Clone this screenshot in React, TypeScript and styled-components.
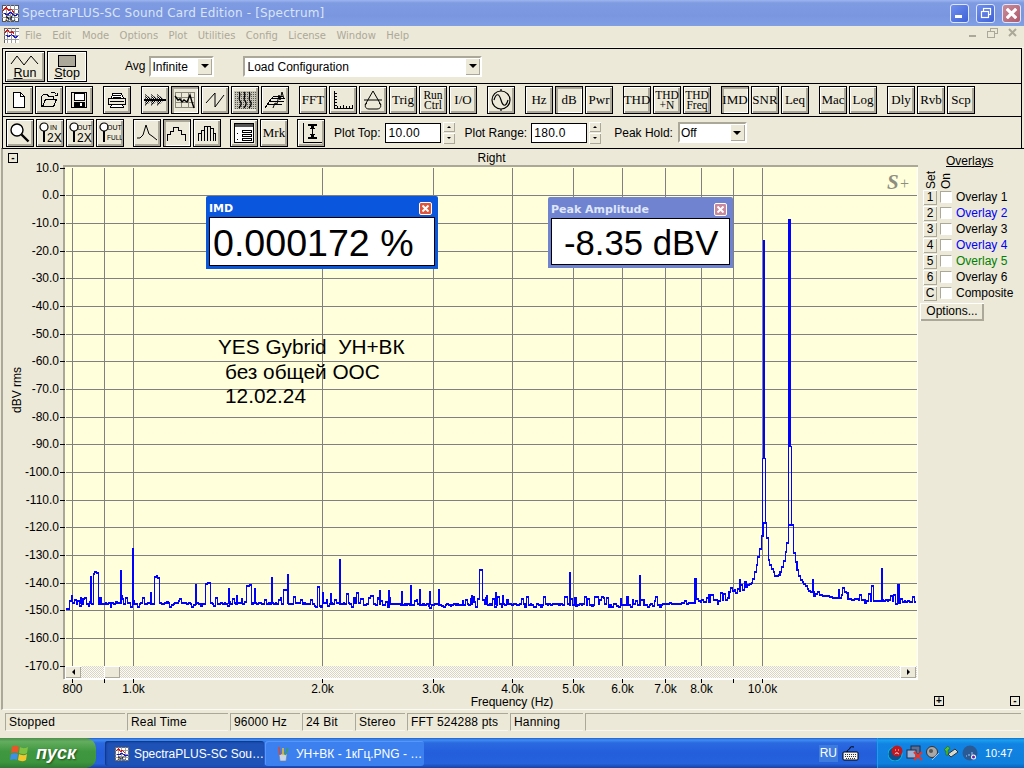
import React, { useMemo } from 'react'
import styled, { createGlobalStyle } from 'styled-components'

const Global = createGlobalStyle`
  html, body { margin: 0; padding: 0; background: #ece9d8; }
  * { box-sizing: border-box; }
`

const FACE = '#ece9d8'
const SHADE = '#aca899'
const SANS = '"Liberation Sans", Arial, sans-serif'
const SERIF = '"Liberation Serif", "Times New Roman", serif'

const Screen = styled.div`
  width: 1024px;
  height: 768px;
  display: flex;
  flex-direction: column;
  overflow: hidden;
  background: ${FACE};
  font-family: ${SANS};
  font-size: 12px;
  color: #000;
`

/* ---------- title + menu ---------- */
const TitleBar = styled.div`
  height: 26px;
  flex: none;
  display: flex;
  align-items: center;
  padding: 0 3px 0 2px;
  gap: 3px;
  background: linear-gradient(180deg, #9db5ef 0, #7e9be2 3px, #7a96df 60%, #809fe4 100%);
  background-color: #7a96df;
`
const TitleText = styled.div`
  flex: 1;
  color: #d8e4f8;
  font-family: "DejaVu Sans", sans-serif;
  font-size: 12px;
  letter-spacing: 0.17px;
  white-space: nowrap;
`
const CapButton = styled.div<{ $red?: boolean }>`
  width: 19px;
  height: 19px;
  margin-left: 4px;
  border-radius: 3px;
  border: 1px solid #dfe6f8;
  display: flex;
  align-items: center;
  justify-content: center;
  background: ${(p) => (p.$red ? 'linear-gradient(135deg,#c98c9a,#ae5a6c)' : 'linear-gradient(135deg,#6f8fee,#3f62d6)')};
`
const MenuBar = styled.div`
  height: 22px;
  flex: none;
  display: flex;
  align-items: center;
  padding: 0 3px 2px 4px;
  border-bottom: 1px solid #f5f3e8;
`
const MenuItems = styled.div`
  flex: 1;
  display: flex;
  gap: 10.4px;
  margin-left: 6px;
  color: ${SHADE};
  font-family: "DejaVu Sans", sans-serif;
  font-size: 10px;
`
const MdiGlyphs = styled.div`
  display: flex;
  gap: 4px;
  margin-top: -6px;
`

/* ---------- toolbars ---------- */
const ToolStack = styled.div`
  flex: none;
  margin: 0 2px 0 2px;
  border-left: 1px solid #000;
  border-right: 1px solid #000;
`
const ToolRow = styled.div<{ $h: number; $pad: number; $gap: number }>`
  height: ${(p) => p.$h}px;
  display: flex;
  align-items: center;
  gap: ${(p) => p.$gap}px;
  padding-left: ${(p) => p.$pad}px;
  border-top: 1px solid #000;
`
const ToolGroup = styled.div`
  display: flex;
  gap: 2px;
`
const ToolButton = styled.div<{ $on?: boolean }>`
  width: 28px;
  height: 28px;
  flex: none;
  border: 1px solid #000;
  background: ${FACE};
  box-shadow: ${(p) => (p.$on ? `inset 2px 2px ${SHADE}, inset -1px -1px #fff` : `inset 1px 1px #fff, inset -2px -2px ${SHADE}`)};
  display: flex;
  align-items: center;
  justify-content: center;
  text-align: center;
  font-family: ${SERIF};
  font-size: 13px;
  line-height: 10px;
  color: #000;
`
const TinyLabel = styled.span`
  font-size: 11.5px;
  line-height: 10.5px;
`
const BigButton = styled.div<{ $on?: boolean }>`
  width: 40px;
  height: 31px;
  padding-top: 2px;
  border: 1px solid #000;
  background: ${FACE};
  box-shadow: ${(p) => (p.$on ? 'inset 1px 1px #fff, inset -1px -1px #fff' : `inset 1px 1px #fff, inset -2px -2px ${SHADE}`)};
  display: flex;
  flex-direction: column;
  align-items: center;
  justify-content: center;
  font-size: 12.5px;
  line-height: 13px;
`
const RunGroup = styled.div`
  display: flex;
  gap: 2px;
  margin-right: 38px;
`
const Label = styled.span<{ $left?: number }>`
  margin-left: ${(p) => p.$left ?? 0}px;
  font-size: 12px;
  white-space: nowrap;
`
const Combo = styled.div<{ $w: number; $left?: number; $pad?: number }>`
  width: ${(p) => p.$w}px;
  margin-left: ${(p) => p.$left ?? 0}px;
  height: 21px;
  display: flex;
  align-items: center;
  justify-content: space-between;
  background: #fff;
  border: 2px solid;
  border-color: ${SHADE} #fff #fff ${SHADE};
  padding: 1px 0 0 ${(p) => p.$pad ?? 1}px;
  font-size: 12px;
`
const ComboArrow = styled.div`
  width: 15px;
  height: 17px;
  margin-top: -1px;
  background: ${FACE};
  box-shadow: inset 1px 1px #fff, inset -1px -1px ${SHADE};
  display: flex;
  align-items: center;
  justify-content: center;
  &::after {
    content: '';
    border: 4px solid transparent;
    border-top: 4px solid #000;
    border-bottom: 0;
  }
`
const EditBox = styled.div<{ $left: number }>`
  width: 56px;
  height: 20px;
  margin-left: ${(p) => p.$left}px;
  background: #fff;
  border: 1px solid #000;
  padding: 1px 2px;
  font-size: 12px;
  line-height: 16px;
  letter-spacing: 0.3px;
`
const SpinBox = styled.div`
  width: 12px;
  height: 22px;
  margin-left: -7px;
  display: flex;
  flex-direction: column;
  gap: 1px;
`
const SpinPart = styled.div<{ $down?: boolean }>`
  flex: 1;
  background: ${FACE};
  box-shadow: inset 1px 1px #fff, inset -1px -1px ${SHADE};
  display: flex;
  align-items: center;
  justify-content: center;
  &::after {
    content: '';
    border: 2px solid transparent;
    ${(p) => (p.$down ? 'border-top: 2px solid #000; border-bottom: 0;' : 'border-bottom: 2px solid #000; border-top: 0;')}
  }
`

/* ---------- plot area ---------- */
const Main = styled.div`
  flex: 1;
  min-height: 0;
  display: flex;
  margin-left: 1px;
  border-top: 1px solid #000;
  border-left: 2px solid ${SHADE};
  border-bottom: 1px solid #fbfaf5;
`
const PlotColumn = styled.div`
  width: 915px;
  flex: none;
  display: flex;
  flex-direction: column;
`
const PlotHead = styled.div`
  height: 18px;
  flex: none;
  display: grid;
  grid-template-columns: 62px 1fr;
  align-items: center;
  font-size: 12px;
  text-align: center;
`
const SmallBox = styled.div`
  width: 10px;
  height: 10px;
  margin-left: 5px;
  border: 1px solid #000;
  background: ${FACE};
  display: flex;
  align-items: center;
  justify-content: center;
  font-size: 10px;
  line-height: 8px;
  font-weight: bold;
`
const Canvas = styled.div`
  position: relative;
  flex: 1;
`
const PlotSvg = styled.svg`
  display: block;
  overflow: visible;
`
const Note = styled.div`
  position: absolute;
  left: 215px;
  top: 168px;
  font-size: 20.8px;
  line-height: 24.6px;
  white-space: pre;
`
const NoteLine = styled.div<{ $indent?: number }>`
  padding-left: ${(p) => p.$indent ?? 0}px;
`
const Readout = styled.div<{ $x: number; $y: number; $w: number; $h: number; $active?: boolean }>`
  position: absolute;
  left: ${(p) => p.$x}px;
  top: ${(p) => p.$y}px;
  width: ${(p) => p.$w}px;
  height: ${(p) => p.$h}px;
  padding: 0 3px 3px;
  border-radius: 2px 2px 0 0;
  background: ${(p) => (p.$active ? '#0a56dc' : '#7083d0')};
  display: flex;
  flex-direction: column;
`
const ReadoutHead = styled.div<{ $active?: boolean }>`
  height: 21px;
  flex: none;
  display: flex;
  align-items: center;
  justify-content: space-between;
  padding: 3px 3px 0 0;
  color: ${(p) => (p.$active ? '#fff' : '#dfe6f8')};
  font-family: "DejaVu Sans", sans-serif;
  font-size: 11px;
  font-weight: bold;
`
const ReadoutClose = styled.div<{ $active?: boolean }>`
  width: 13px;
  height: 13px;
  border: 1px solid #fff;
  border-radius: 2px;
  background: ${(p) => (p.$active ? '#e0563a' : '#c88a9c')};
  display: flex;
  align-items: center;
  justify-content: center;
`
const ReadoutBody = styled.div<{ $size: number; $pad: number }>`
  flex: 1;
  border: 1px solid #000;
  background: #fff;
  display: flex;
  align-items: center;
  padding: 4px 0 0 ${(p) => p.$pad}px;
  font-size: ${(p) => p.$size}px;
  white-space: nowrap;
`
const Scrollbar = styled.div`
  position: absolute;
  left: 62px;
  top: 499px;
  width: 852px;
  height: 13px;
  border-bottom: 1px solid #fff;
  padding-right: 1px;
  background: repeating-conic-gradient(#d8d5c6 0 25%, #fcfbf6 0 50%) 0 0 / 2px 2px;
  display: flex;
  justify-content: space-between;
`
const ScrollBtn = styled.div<{ $dir?: string }>`
  width: 16px;
  height: 12px;
  background: ${FACE};
  box-shadow: inset 1px 1px #fff, inset -1px -1px ${SHADE};
  display: flex;
  align-items: center;
  justify-content: center;
  &::after {
    content: '';
    border: 3px solid transparent;
    ${(p) => (p.$dir === 'l' ? 'border-right: 3px solid #000; border-left: 0;' : 'border-left: 3px solid #000; border-right: 0;')}
  }
`
const ScrollThumb = styled.div`
  position: absolute;
  left: 39px;
  top: 0;
  width: 16px;
  height: 12px;
  background: ${FACE};
  box-shadow: inset 1px 1px #fff, inset -1px -1px ${SHADE};
`

/* ---------- overlays ---------- */
const Side = styled.div`
  flex: 1;
  display: flex;
  flex-direction: column;
  align-items: flex-start;
  padding-left: 2px;
`
const SideTitle = styled.div`
  margin: 6px 0 0 26px;
  text-decoration: underline;
  font-size: 12px;
  line-height: 13px;
`
const SideHead = styled.div`
  display: flex;
  gap: 3px;
  margin: 0 0 0 5px;
  height: 21px;
`
const VertText = styled.div`
  width: 12px;
  writing-mode: vertical-rl;
  transform: rotate(180deg);
  font-size: 12px;
  line-height: 12px;
`
const OverlayRow = styled.div`
  display: flex;
  align-items: center;
  height: 16px;
  padding-left: 3px;
`
const SetButton = styled.div`
  width: 14px;
  height: 15px;
  background: ${FACE};
  box-shadow: inset 1px 1px #fff, inset -1px -1px ${SHADE};
  text-align: center;
  font-size: 12px;
  line-height: 15px;
`
const Check = styled.div`
  width: 12px;
  height: 12px;
  margin: 0 4px 0 3px;
  background: #fff;
  border: 1px solid;
  border-color: ${SHADE} #fff #fff ${SHADE};
`
const OverlayName = styled.span<{ $c: string }>`
  color: ${(p) => p.$c};
  font-size: 12px;
`
const OptionsBtn = styled.div`
  width: 64px;
  height: 18px;
  margin-top: 2px;
  background: ${FACE};
  box-shadow: inset 1px 1px #fff, inset -2px -2px ${SHADE};
  text-align: center;
  font-size: 12px;
  line-height: 17px;
`
const ZoomRow = styled.div`
  margin-top: auto;
  width: 100%;
  display: flex;
  justify-content: space-between;
  padding: 0 4px 3px 9px;
`

/* ---------- status ---------- */
const StatusBar = styled.div`
  height: 28px;
  flex: none;
  display: flex;
  gap: 2px;
  padding: 3px 3px 7px 5px;
`
const StatusCell = styled.div<{ $w?: number }>`
  width: ${(p) => (p.$w ? `${p.$w}px` : 'auto')};
  flex: ${(p) => (p.$w ? 'none' : 1)};
  border-top: 1px solid ${SHADE};
  border-left: 1px solid ${SHADE};
  border-bottom: 1px solid #f8f6ee;
  padding-left: 3px;
  font-size: 12px;
  line-height: 16px;
  letter-spacing: 0.2px;
  white-space: nowrap;
`

/* ---------- taskbar ---------- */
const Taskbar = styled.div`
  height: 30px;
  flex: none;
  display: flex;
  align-items: stretch;
  background: linear-gradient(180deg, #1f5fcf 0, #3f8cf3 2px, #2a69e0 5px, #245edb 50%, #2562dc 85%, #1941a5 100%);
  color: #fff;
`
const StartBtn = styled.div`
  width: 96px;
  flex: none;
  display: flex;
  align-items: center;
  gap: 6px;
  padding-left: 10px;
  border-radius: 0 10px 10px 0;
  background: linear-gradient(180deg, #4c8f4c 0, #63ad5f 12%, #3f973f 45%, #3d963d 80%, #2f7a35 100%);
  font-family: ${SANS};
  font-style: italic;
  font-weight: bold;
  font-size: 18px;
  text-shadow: 1px 1px 2px #1d4d1d;
`
const TaskList = styled.div`
  display: flex;
  gap: 1px;
  margin-left: 9px;
  padding: 3px 0 2px;
`
const TaskBtn = styled.div<{ $on?: boolean }>`
  width: 159px;
  display: flex;
  align-items: center;
  gap: 5px;
  padding-left: 10px;
  border-radius: 3px;
  background: ${(p) => (p.$on ? '#1e52b7' : '#3c80f0')};
  box-shadow: ${(p) => (p.$on ? 'inset 1px 1px 2px #10337c' : 'inset 1px 1px 0 #5a97f4')};
  font-size: 12px;
  white-space: nowrap;
`
const LangArea = styled.div`
  flex: 1;
  display: flex;
  align-items: center;
  justify-content: flex-end;
  gap: 4px;
  padding-right: 18px;
`
const LangChip = styled.div`
  padding: 1px 1px;
  background: #3d7bdf;
  font-size: 12px;
  line-height: 15px;
`
const Tray = styled.div`
  width: 147px;
  flex: none;
  display: flex;
  align-items: center;
  gap: 2px;
  padding-left: 10px;
  border-left: 1px solid #13a3ea;
  background: linear-gradient(180deg, #0f6fd0 0, #1aa0ee 2px, #1183e2 6px, #0f7fdd 85%, #0b5fb8 100%);
  font-size: 12px;
`
const Clock = styled.span`
  margin-left: 5px;
  font-size: 11px;
`

/* ---------- icons ---------- */
const Svg = ({ w = 20, h = 20, children }: { w?: number; h?: number; children: React.ReactNode }) => (
  <svg width={w} height={h} viewBox={`0 0 ${w} ${h}`} fill="none" stroke="#000" strokeWidth="1" shapeRendering="crispEdges">
    {children}
  </svg>
)

const smallText = { fontFamily: SANS, fontSize: 7, stroke: 'none', fill: '#000' } as const

const icons: Record<string, React.ReactNode> = {
  page: (
    <Svg>
      <path d="M4.500 2.500h7l4 4v11h-11z" fill="#fff" strokeWidth="1.2" />
      <path d="M11.500 2.500v4h4" />
    </Svg>
  ),
  open: (
    <Svg>
      <path d="M2.500 16.500v-10l2-2h4l1 2h5v3M2.500 16.500h12l3-7h-11l-3 7" fill="#ece9d8" strokeWidth="1.1" />
      <path d="M12.500 2.500c2-1 4 0 5 2M18.500 2.500v3h-3" />
    </Svg>
  ),
  save: (
    <Svg>
      <path d="M2.500 2.500h15v15h-15z" fill="#ece9d8" />
      <rect x="5" y="3" width="10" height="7" fill="#fff" />
      <rect x="5" y="12" width="10" height="5" fill="#000" />
      <rect x="11" y="13" width="2" height="3" fill="#fff" stroke="none" />
    </Svg>
  ),
  print: (
    <Svg>
      <path d="M5.500 3.500h9l2 5h-12z" fill="#fff" />
      <path d="M6 5h8M6 7h8" />
      <path d="M1.500 8.500h17v6h-17z" fill="#ece9d8" strokeWidth="1.2" />
      <path d="M4.500 14.500h11l1 3h-13z" fill="#fff" />
      <path d="M3 11h14" />
    </Svg>
  ),
  arrows: (
    <Svg w={24}>
      <defs>
        <pattern id="hatch" width="2" height="2" patternUnits="userSpaceOnUse">
          <rect width="1" height="1" fill="#000" stroke="none" />
          <rect x="1" y="1" width="1" height="1" fill="#000" stroke="none" />
        </pattern>
      </defs>
      <path d="M2 4l7 6-7 6zM8 4l7 6-7 6zM14 4l7 6-7 6z" fill="url(#hatch)" stroke="#777" strokeWidth="0.6" />
      <path d="M1 10h22" strokeWidth="1.2" />
    </Svg>
  ),
  gridTrace: (
    <Svg w={22}>
      <path d="M1.500 2.500h19v15h-19zM1.500 7.500h19M1.500 12.500h19M7.500 2.500v15M14.500 2.500v15" stroke="#8a8778" />
      <path d="M1 6l3 4 2-1 2 3 2-2 3 2 3-7 2 7 2 6" stroke="#000" strokeWidth="1.4" shapeRendering="auto" />
    </Svg>
  ),
  saw: (
    <Svg w={22}>
      <path d="M2 13L11 3v14L20 5" shapeRendering="auto" />
    </Svg>
  ),
  speckle: (
    <Svg w={24}>
      <defs>
        <pattern id="dots" width="2" height="2" patternUnits="userSpaceOnUse">
          <rect width="2" height="2" fill="#c8c5b6" stroke="none" />
          <rect width="1" height="1" fill="#555" stroke="none" />
        </pattern>
      </defs>
      <rect x="1" y="1" width="22" height="18" fill="url(#dots)" stroke="none" />
      <path d="M6 2c3 4-2 6 1 9s0 5-1 7M11 2c3 4-2 6 1 9s0 5-1 7M16 2c3 4-2 6 1 9s0 5-1 7" strokeWidth="1.300" shapeRendering="auto" />
    </Svg>
  ),
  water: (
    <Svg w={22}>
      <path d="M1 18l3-4h14M3 15l3-4h14M5 12l3-4h13M7 9l3-3h9" />
      <path d="M9 18l2-5 2 1 2-9 1 5 2-8 2 7" shapeRendering="auto" />
    </Svg>
  ),
  axes: (
    <Svg w={22}>
      <path d="M2.500 1v17h18" strokeWidth="1" />
      <path d="M2 3h3M2 6h3M2 9h3M2 12h3M2 15h3M5 18v-2M8 18v-2M11 18v-3M14 18v-2M17 18v-2M20 18v-3" />
    </Svg>
  ),
  scope: (
    <Svg w={22}>
      <path d="M11 1L3 15M11 1l8 14M2 10h18" shapeRendering="auto" />
      <path d="M5 13c-3 2-2 6 2 6h8c4 0 5-4 2-6" shapeRendering="auto" />
    </Svg>
  ),
  sine: (
    <Svg w={24} h={24}>
      <circle cx="12" cy="12" r="9" shapeRendering="auto" strokeWidth="1.2" />
      <path d="M5 12c2-7 5-7 7 0s5 7 7 0M12 1v2M12 21v2" shapeRendering="auto" strokeWidth="1.2" />
    </Svg>
  ),
  lens: (
    <Svg w={22} h={22}>
      <circle cx="8" cy="8" r="6" fill="#fff" shapeRendering="auto" strokeWidth="1.4" />
      <path d="M12.500 12.500l7 7" strokeWidth="2.400" shapeRendering="auto" />
    </Svg>
  ),
  in2: (
    <Svg w={24} h={24}>
      <circle cx="6" cy="6" r="4" fill="#fff" shapeRendering="auto" strokeWidth="1.2" />
      <path d="M6 10v11" strokeWidth="2.400" />
      <text x="12" y="9" style={smallText}>IN</text>
      <text x="9" y="21" style={{ ...smallText, fontSize: 12 }}>2X</text>
    </Svg>
  ),
  out2: (
    <Svg w={24} h={24}>
      <circle cx="6" cy="6" r="4" fill="#fff" shapeRendering="auto" strokeWidth="1.2" />
      <path d="M6 10v11" strokeWidth="2.400" />
      <text x="9" y="9" style={smallText}>OUT</text>
      <text x="9" y="21" style={{ ...smallText, fontSize: 12 }}>2X</text>
    </Svg>
  ),
  outFull: (
    <Svg w={24} h={24}>
      <circle cx="6" cy="6" r="4" fill="#fff" shapeRendering="auto" strokeWidth="1.2" />
      <path d="M6 10v11" strokeWidth="2.400" />
      <text x="9" y="9" style={smallText}>OUT</text>
      <text x="9" y="19" style={{ ...smallText, fontSize: 6.5 }}>FULL</text>
    </Svg>
  ),
  peak: (
    <Svg w={22}>
      <path d="M1 15h3l3-3 3-10 3 9 3 2 5 4" shapeRendering="auto" />
    </Svg>
  ),
  hist: (
    <Svg w={22}>
      <path d="M1.500 18v-7h3v-3h3v-4h5v3h3v4h4v7" />
    </Svg>
  ),
  bars: (
    <Svg w={22}>
      <path d="M2.500 18v-8h3v8M5.500 10v-3h3v11M8.500 7v-4h3v15M11.500 3h3v15M14.500 5h3v13M17.500 10h2v8" />
    </Svg>
  ),
  table: (
    <Svg w={22} h={22}>
      <path d="M1.500 1.500h19v19h-19z" fill="#fff" />
      <rect x="2" y="2" width="18" height="3" fill="#555" stroke="none" />
      <path d="M9.500 8.500h9v2h-9zM9.500 12.500h9v2h-9zM9.500 16.500h9v2h-9z" />
      <path d="M4 11h2M4 17h2" strokeDasharray="1 1" />
    </Svg>
  ),
  range: (
    <Svg w={22} h={22}>
      <path d="M3.500 1v19h18" />
      <path d="M8 3h9M8 16h9" strokeWidth="1.4" />
      <path d="M12.500 4v11" />
      <path d="M12.500 3l-3 4h6zM12.500 16l-3-4h6z" fill="#000" stroke="none" />
    </Svg>
  ),
}

const AppIcon = ({ size = 16, sc }: { size?: number; sc?: boolean }) => (
  <svg width={size} height={size} viewBox="0 0 16 16" shapeRendering="crispEdges">
    <rect width="16" height="16" fill="#fff" stroke="#555" />
    <path d="M0 4h16M0 8h16M0 12h16M4 0v16M8 0v16M12 0v16" stroke="#999" strokeWidth="1" />
    <path d="M1 5l3-3 2 3 3-1 2 3" stroke="#d01818" strokeWidth="1.2" fill="none" />
    <path d="M2 8l3 1 3-2 4 3 3-1" stroke="#1818d0" strokeWidth="1.2" fill="none" />
    {sc && (
      <text x="3" y="15" fontFamily={SERIF} fontStyle="italic" fontWeight="bold" fontSize="8" fill="#000">
        SC
      </text>
    )}
  </svg>
)

const Cross = ({ size = 7, c = '#fff', w = 2 }: { size?: number; c?: string; w?: number }) => (
  <svg width={size} height={size} viewBox="0 0 7 7">
    <path d="M0.5 0.5l6 6M6.5 0.5l-6 6" stroke={c} strokeWidth={w} />
  </svg>
)

/* ---------- spectrum data, in page pixels ---------- */
const Y0 = 195.3
const YK = 2.767
const yOf = (db: number) => Math.round(Y0 - db * YK) + 0.5
const xOf = (f: number) => Math.round(133 + 629 * Math.log10(f / 1000)) + 0.5

const dbTicks = Array.from({ length: 19 }, (_, i) => 10 - i * 10)
const freqTicks = [800, 900, 1000, 2000, 3000, 4000, 5000, 6000, 7000, 8000, 9000, 10000]
const freqLabels: [number, string][] = [
  [800, '800'], [1000, '1.0k'], [2000, '2.0k'], [3000, '3.0k'], [4000, '4.0k'], [5000, '5.0k'],
  [6000, '6.0k'], [7000, '7.0k'], [8000, '8.0k'], [10000, '10.0k'],
]

const floorPts: [number, number][] = [
  [66, 609], [68, 609], [69, 601], [72, 604], [650, 605], [700, 603], [725, 600], [730, 597], [733, 591], [735, 595],
  [745, 588], [748, 585], [752, 582], [755, 570], [758, 557], [760, 547], [761.7, 532], [762.5, 523],
  [765.5, 523], [766.7, 543], [768, 560], [772, 570], [775, 576], [778, 576], [780, 572], [783, 563], [785, 553],
  [787, 542], [788, 525], [792, 525], [793, 550], [795, 560], [797, 570], [800, 580], [805, 585], [808, 590],
  [818, 596], [850, 600], [880, 601], [915, 602],
]

// x from, x to, top
const pedestals: [number, number, number][] = [
  [92, 98, 572], [154, 159, 576], [204, 209, 583], [246, 250, 585], [282, 287, 589], [316, 318, 586],
  [345, 348, 593], [356, 358, 592], [369, 372, 594], [478, 481, 568], [694, 696, 578], [842, 844, 587],
  [871, 873, 586], [896, 899, 583],
]
// x, top, heavy spikes
const spikes: [number, number][] = [
  [81, 597], [91, 576], [121, 570], [133, 548], [151, 592], [196, 584], [229, 588], [237, 595], [255, 588],
  [272, 577], [288, 574], [323, 592], [331, 593], [340, 559], [380, 590], [389, 590], [402, 591], [411, 585],
  [420, 589], [430, 591], [439, 589], [472, 595], [487, 595], [496, 592], [503, 595], [570, 572], [640, 575],
  [709, 594], [740, 579], [813, 579], [839, 589], [882, 568],
]

const lerp = (x: number) => {
  for (let i = 1; i < floorPts.length; i++) {
    const [x0, y0] = floorPts[i - 1]
    const [x1, y1] = floorPts[i]
    if (x <= x1) return y0 + ((y1 - y0) * (x - x0)) / (x1 - x0 || 1)
  }
  return 602
}

const buildTrace = () => {
  let seed = 4711
  const rnd = () => {
    seed = (seed * 1103515245 + 12345) & 0x7fffffff
    return seed / 0x7fffffff
  }
  let d = 'M66 609'
  for (let x = 66; x < 915; x += 1.7) {
    let y = lerp(x)
    const quiet = x > 745 && x < 812
    if (!quiet && x > 69) {
      const r = rnd()
      if (r < 0.2) y -= 2 + rnd() * 6
      else if (r < 0.32) y += 1 + rnd() * 2
      else if (r < 0.65) y -= 1
    }
    const ped = pedestals.find((p) => x >= p[0] && x <= p[1])
    if (ped) y = ped[2] + rnd() * 2
    d += `V${y.toFixed(0)}H${(x + 1.7).toFixed(1)}`
  }
  const heavy = spikes.map(([x, top]) => `M${x} ${Math.round(lerp(x))}V${top}`).join('')
  return { d, heavy }
}

const Plot = () => {
  const { d, heavy } = useMemo(buildTrace, [])
  return (
    <PlotSvg width={915} height={543} viewBox="3 167 915 543">
      <rect x="65" y="167" width="853" height="500" fill="#ffffdc" />
      <g shapeRendering="crispEdges">
        <path d="M64 679V166H918" stroke={SHADE} strokeWidth="2" fill="none" />
        <path d="M917.5 167V679M64 679H918" stroke="#fff" fill="none" />
        {dbTicks.map((db) => (
          <path key={db} d={`M60 ${yOf(db)}H65`} stroke="#000" />
        ))}
        {dbTicks.slice(1).map((db) => (
          <path key={db} d={`M66 ${yOf(db)}H917`} stroke="#808080" />
        ))}
        {freqTicks.map((f) => (
          <g key={f}>
            <path d={`M${xOf(f)} 168V666`} stroke="#808080" />
            <path d={`M${xOf(f)} 679V683`} stroke="#000" />
          </g>
        ))}
      </g>
      <path d={d} stroke="#0000ff" strokeWidth="1.1" fill="none" shapeRendering="crispEdges" />
      <path d={heavy} stroke="#0000ff" strokeWidth="1.8" fill="none" shapeRendering="crispEdges" />
      <path d="M762.5 523V458M765.5 523V458M788.5 525V446M791.5 525V446" stroke="#0000ff" strokeWidth="1.1" fill="none" shapeRendering="crispEdges" />
      <path d="M764 459V240M789.5 447V219" stroke="#0000ff" strokeWidth="2.4" fill="none" shapeRendering="crispEdges" />
      <g fontFamily={SANS} fontSize="12" fill="#000">
        {dbTicks.map((db) => (
          <text key={db} x="59" y={Y0 - db * YK + 4} textAnchor="end">
            {db === 0 ? '0.0' : db.toFixed(1)}
          </text>
        ))}
        {freqLabels.map(([f, label]) => (
          <text key={f} x={xOf(f)} y="693" textAnchor="middle">
            {label}
          </text>
        ))}
        <text x="512" y="706" textAnchor="middle">Frequency (Hz)</text>
        <text transform="translate(21 390) rotate(-90)" textAnchor="middle">dBV rms</text>
      </g>
      <text x="887" y="189" fontFamily={SERIF} fontStyle="italic" fontWeight="bold" fontSize="21" fill="#8e8e80">S</text>
      <text x="899" y="189" fontFamily={SERIF} fontStyle="italic" fontSize="16" fill="#8e8e80">+</text>
    </PlotSvg>
  )
}

/* ---------- toolbar content ---------- */
const row2: (string | [string, boolean?])[][] = [
  ['page', 'open', 'save'],
  ['print'],
  ['arrows', ['gridTrace', true], 'saw', 'speckle', 'water'],
  ['FFT', 'axes', 'scope', 'Trig', 'Run|Ctrl', 'I/O'],
  ['sine'],
  ['Hz', ['dB', true], 'Pwr'],
  ['THD', 'THD|+N', 'THD|Freq'],
  [['IMD', true], 'SNR', 'Leq'],
  ['Mac', 'Log'],
  ['Dly', 'Rvb', 'Scp'],
]

const row3: (string | [string, boolean?])[][] = [
  ['lens', 'in2', 'out2', 'outFull'],
  ['peak', ['hist', true], 'bars'],
  ['table', 'Mrk'],
  ['range'],
]

const ToolCell = ({ item }: { item: string | [string, boolean?] }) => {
  const [name, on] = typeof item === 'string' ? [item, false] : item
  const icon = icons[name]
  if (icon) return <ToolButton $on={on}>{icon}</ToolButton>
  if (name.includes('|')) {
    const [a, b] = name.split('|')
    return (
      <ToolButton $on={on}>
        <TinyLabel>
          {a}
          <br />
          {b}
        </TinyLabel>
      </ToolButton>
    )
  }
  return <ToolButton $on={on}>{name}</ToolButton>
}

const Spin = () => (
  <SpinBox>
    <SpinPart />
    <SpinPart $down />
  </SpinBox>
)

const overlays: [string, string, string][] = [
  ['1', 'Overlay 1', '#000000'],
  ['2', 'Overlay 2', '#0000ff'],
  ['3', 'Overlay 3', '#000000'],
  ['4', 'Overlay 4', '#0000ff'],
  ['5', 'Overlay 5', '#008000'],
  ['6', 'Overlay 6', '#000000'],
  ['C', 'Composite', '#000000'],
]

const statusCells: [string, number?][] = [
  ['Stopped', 120], ['Real Time', 101], ['96000 Hz', 70], ['24 Bit', 51], ['Stereo', 50], ['FFT 524288 pts', 101], ['Hanning', 73], [''],
]

const App = () => {
  return (
    <Screen>
      <Global />
      <TitleBar>
        <AppIcon size={17} sc />
        <TitleText>SpectraPLUS-SC Sound Card Edition - [Spectrum]</TitleText>
        <CapButton>
          <svg width="9" height="9"><rect x="0" y="6" width="7" height="3" fill="#fff" /></svg>
        </CapButton>
        <CapButton>
          <svg width="12" height="12" fill="none" stroke="#fff">
            <rect x="3.5" y="1.5" width="7" height="6" strokeWidth="1.2" />
            <rect x="1.5" y="4.5" width="7" height="6" fill="#5a7be2" strokeWidth="1.2" />
          </svg>
        </CapButton>
        <CapButton $red>
          <Cross size={11} w={2} />
        </CapButton>
      </TitleBar>
      <MenuBar>
        <AppIcon size={15} />
        <MenuItems>
          {['File', 'Edit', 'Mode', 'Options', 'Plot', 'Utilities', 'Config', 'License', 'Window', 'Help'].map((m) => (
            <span key={m}>{m}</span>
          ))}
        </MenuItems>
        <MdiGlyphs>
          <svg width="16" height="12"><rect x="4" y="8" width="7" height="2" fill={SHADE} /></svg>
          <svg width="16" height="12" fill="none" stroke={SHADE}>
            <rect x="5.5" y="1.5" width="7" height="5" />
            <rect x="2.5" y="4.5" width="7" height="6" fill={FACE} />
          </svg>
          <svg width="16" height="12" viewBox="-4 -2 16 12"><path d="M0 0l7 7M7 0L0 7" stroke={SHADE} strokeWidth="2" /></svg>
        </MdiGlyphs>
      </MenuBar>
      <ToolStack>
        <ToolRow $h={35} $pad={2} $gap={0}>
          <RunGroup>
            <BigButton>
              <svg width="30" height="13" fill="none" stroke="#000"><path d="M1 10L7 2l7 9 7-9 7 8" /></svg>
              <span><u>R</u>un</span>
            </BigButton>
            <BigButton $on>
              <svg width="26" height="13"><rect x="4.5" y="1.5" width="17" height="11" fill={SHADE} stroke="#000" /></svg>
              <span><u>S</u>top</span>
            </BigButton>
          </RunGroup>
          <Label>Avg</Label>
          <Combo $w={65} $left={4}>
            Infinite
            <ComboArrow />
          </Combo>
          <Combo $w={239} $left={29} $pad={2}>
            Load Configuration
            <ComboArrow />
          </Combo>
        </ToolRow>
        <ToolRow $h={33} $pad={2} $gap={10}>
          {row2.map((group, i) => (
            <ToolGroup key={i}>
              {group.map((item, j) => (
                <ToolCell key={j} item={item} />
              ))}
            </ToolGroup>
          ))}
        </ToolRow>
        <ToolRow $h={32} $pad={3} $gap={9}>
          {row3.map((group, i) => (
            <ToolGroup key={i}>
              {group.map((item, j) => (
                <ToolCell key={j} item={item} />
              ))}
            </ToolGroup>
          ))}
          <Label>Plot Top:</Label>
          <EditBox $left={-4}>10.00</EditBox>
          <Spin />
          <Label>Plot Range:</Label>
          <EditBox $left={-5}>180.0</EditBox>
          <Spin />
          <Label $left={4}>Peak Hold:</Label>
          <Combo $w={69} $left={-4}>
            Off
            <ComboArrow />
          </Combo>
        </ToolRow>
      </ToolStack>
      <Main>
        <PlotColumn>
          <PlotHead>
            <SmallBox>-</SmallBox>
            <span>Right</span>
          </PlotHead>
          <Canvas>
            <Plot />
            <Scrollbar>
              <ScrollBtn $dir="l" />
              <ScrollThumb />
              <ScrollBtn $dir="r" />
            </Scrollbar>
            <Readout $x={203} $y={29} $w={232} $h={73} $active>
              <ReadoutHead $active>
                IMD
                <ReadoutClose $active>
                  <Cross />
                </ReadoutClose>
              </ReadoutHead>
              <ReadoutBody $size={37.6} $pad={3}>0.000172 %</ReadoutBody>
            </Readout>
            <Readout $x={545} $y={30} $w={185} $h={71}>
              <ReadoutHead>
                Peak Amplitude
                <ReadoutClose>
                  <Cross />
                </ReadoutClose>
              </ReadoutHead>
              <ReadoutBody $size={34.7} $pad={12}>-8.35 dBV</ReadoutBody>
            </Readout>
            <Note>
              <NoteLine>{'YES Gybrid  УН+ВК'}</NoteLine>
              <NoteLine $indent={7}>без общей ООС</NoteLine>
              <NoteLine $indent={7}>12.02.24</NoteLine>
            </Note>
          </Canvas>
        </PlotColumn>
        <Side>
          <SideTitle>Overlays</SideTitle>
          <SideHead>
            <VertText>Set</VertText>
            <VertText>On</VertText>
          </SideHead>
          {overlays.map(([n, name, c]) => (
            <OverlayRow key={n}>
              <SetButton>{n}</SetButton>
              <Check />
              <OverlayName $c={c}>{name}</OverlayName>
            </OverlayRow>
          ))}
          <OptionsBtn>Options...</OptionsBtn>
          <ZoomRow>
            <SmallBox>+</SmallBox>
            <SmallBox>-</SmallBox>
          </ZoomRow>
        </Side>
      </Main>
      <StatusBar>
        {statusCells.map(([t, w], i) => (
          <StatusCell key={i} $w={w}>
            {t}
          </StatusCell>
        ))}
      </StatusBar>
      <Taskbar>
        <StartBtn>
          <svg width="20" height="18" viewBox="0 0 20 18">
            <path d="M2 3c3-2 5-1 7 0l-1 6c-2-1-4-1-7 0z" fill="#e8562a" />
            <path d="M10 3c2 1 4 2 8 0l-1 6c-3 2-6 1-8 0z" fill="#7fc241" />
            <path d="M1 10c3-1 5-1 7 0l-1 6c-2-1-4-1-7 0z" fill="#3d8fe8" />
            <path d="M9 10c2 1 5 2 8 0l-1 6c-3 2-6 1-8 0z" fill="#f5c52c" />
          </svg>
          <span>пуск</span>
        </StartBtn>
        <TaskList>
          <TaskBtn $on>
            <AppIcon size={16} sc />
            SpectraPLUS-SC Sou…
          </TaskBtn>
          <TaskBtn>
            <svg width="16" height="16" viewBox="0 0 16 16">
              <path d="M4 8h8l-1 7H5z" fill="#c8d4e8" stroke="#6a7a9a" strokeWidth="0.6" />
              <path d="M5 9L4 1" stroke="#d84a2a" strokeWidth="1.6" />
              <path d="M8 9V2" stroke="#e8c02a" strokeWidth="1.6" />
              <path d="M10 9l3-7" stroke="#3aa04a" strokeWidth="1.6" />
            </svg>
            УН+ВК - 1кГц.PNG - …
          </TaskBtn>
        </TaskList>
        <LangArea>
          <LangChip>RU</LangChip>
          <svg width="17" height="15" viewBox="0 0 17 15">
            <rect x="1" y="6" width="15" height="8" rx="1" fill="#f4f4f4" stroke="#000" />
            <path d="M3 8.500h11M3 10.500h11M4 12.500h9" stroke="#333" strokeDasharray="1 1" />
            <path d="M5 6C5 3 8 4 8 2s3-1 4-1" stroke="#000" fill="none" />
          </svg>
        </LangArea>
        <Tray>
          <svg width="16" height="16" viewBox="0 0 16 16">
            <circle cx="7" cy="9" r="7" fill="#0b4f8c" stroke="#0ff" strokeWidth="0.6" />
            <circle cx="9" cy="6" r="5.500" fill="#c01820" />
            <path d="M7 5h.8M10 5h.8M6.800 9c1-1.500 3-1.500 4 0" stroke="#fff" fill="none" />
          </svg>
          <svg width="17" height="16" viewBox="0 0 17 16">
            <rect x="5" y="1" width="9" height="8" fill="#5a6f96" stroke="#222b44" />
            <rect x="1" y="5" width="9" height="8" fill="#9fb2d4" stroke="#222b44" />
            <path d="M8 7l8 8M16 7l-8 8" stroke="#e8342a" strokeWidth="2.200" />
          </svg>
          <svg width="16" height="16" viewBox="0 0 16 16">
            <circle cx="7" cy="7" r="5.500" fill="#a8a8a8" stroke="#333" />
            <circle cx="6" cy="6" r="2" fill="#555" />
            <path d="M7 15l7-7" stroke="#9cc4f4" />
          </svg>
          <svg width="17" height="16" viewBox="0 0 17 16">
            <path d="M8 12l7-5-3-3-7 5z" fill="#d8d8cc" stroke="#333" />
            <path d="M1 5l4-4 2 3-2 1v5H3V6z" fill="#55c22a" stroke="#1a6a1a" strokeWidth="0.6" />
          </svg>
          <svg width="16" height="16" viewBox="0 0 16 16">
            <circle cx="8" cy="8" r="7.500" fill="#2a5a96" />
            <path d="M4 11h1M7 9v2M10 7v3" stroke="#9cc4f4" />
            <circle cx="11.500" cy="12" r="2.500" fill="#fff" />
            <circle cx="11.500" cy="12" r="1.500" fill="#6a1ea8" />
          </svg>
          <Clock>10:47</Clock>
        </Tray>
      </Taskbar>
    </Screen>
  )
}

export default App
